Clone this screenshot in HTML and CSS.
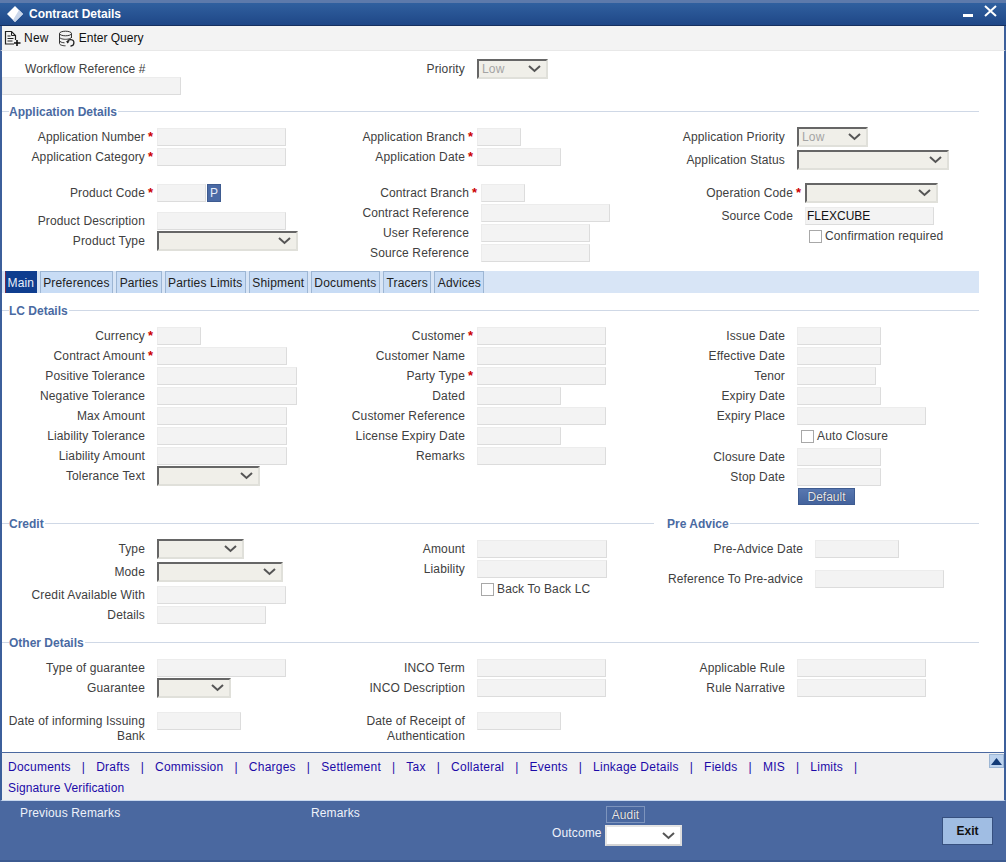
FILE: index.html
```html
<!DOCTYPE html>
<html lang="en">
<head>
<meta charset="utf-8">
<title>Contract Details</title>
<link rel="stylesheet" href="styles.css">
</head>
<body>
<div class="window">
  <header class="titlebar">
    <svg class="logo" width="18" height="18" viewBox="0 0 18 18"><path d="M9 1l8 8-8 8-8-8z" fill="#fff"/><path d="M13 5l4 4-8 8-2-2z" fill="#c9d6ea"/></svg>
    <span class="title">Contract Details</span>
    <svg class="min" width="10" height="4" viewBox="0 0 10 4"><rect width="10" height="3" y="1" fill="#fff"/></svg>
    <svg class="close" width="13" height="12" viewBox="0 0 13 12"><path d="M1 1l11 10M12 1L1 11" stroke="#fff" stroke-width="2" fill="none"/></svg>
  </header>
  <div class="toolbar">
    <span class="tool">
      <svg width="17" height="17" viewBox="0 0 17 17"><path d="M10 14H1.500V1.500h6l4 4V10" fill="none" stroke="#222" stroke-width="1.200"/><path d="M7.500 1.500v4h4M3.500 6h3M3.500 8.500h6M3.500 11h5" fill="none" stroke="#222"/><path d="M13 10v6M10 13h6.500" stroke="#111" stroke-width="1.600"/></svg>
      New
    </span>
    <span class="tool tool-query">
      <svg width="17" height="17" viewBox="0 0 17 17"><ellipse cx="7.500" cy="3.500" rx="6" ry="2.300" fill="none" stroke="#333"/><path d="M1.500 3.500v10c0 1.300 2.700 2.300 6 2.300M13.500 3.500V8M1.500 7c0 1.300 2.700 2.300 6 2.300s6-1 6-2.300M1.500 10.500c0 1.300 2.700 2.300 5 2.300" fill="none" stroke="#333"/><path d="M9.500 12.500a3.200 3.200 0 1 1 3 3.500" fill="none" stroke="#222" stroke-width="1.300"/><path d="M8 11l1.500 2.500 2-2z" fill="#222"/></svg>
      Enter Query
    </span>
  </div>

  <main class="form">
    <div class="cols top">
      <div>
        <div class="wf-label">Workflow Reference #</div>
        <input class="in w179" readonly>
      </div>
      <div>
        <div class="field"><label>Priority</label><span class="star"></span>
          <div class="sel w71"><span class="val">Low</span><svg class="chev" width="13" height="8" viewBox="0 0 13 8"><path d="M1 1l5.500 5L12 1" fill="none" stroke="#555" stroke-width="2"/></svg></div>
        </div>
      </div>
      <div></div>
    </div>

    <div class="legend"><span>Application Details</span></div>
    <div class="cols">
      <div>
        <div class="field"><label>Application Number</label><span class="star">*</span><input class="in w129" readonly></div>
        <div class="field"><label>Application Category</label><span class="star">*</span><input class="in w129" readonly></div>
        <div class="field mt16"><label>Product Code</label><span class="star">*</span><input class="in w49" readonly><button class="pbtn" type="button">P</button></div>
        <div class="field mt8"><label>Product Description</label><span class="star"></span><input class="in w129" readonly></div>
        <div class="field"><label>Product Type</label><span class="star"></span>
          <div class="sel w141"><svg class="chev" width="13" height="8" viewBox="0 0 13 8"><path d="M1 1l5.500 5L12 1" fill="none" stroke="#555" stroke-width="2"/></svg></div>
        </div>
      </div>
      <div>
        <div class="field"><label>Application Branch</label><span class="star">*</span><input class="in w44" readonly></div>
        <div class="field"><label>Application Date</label><span class="star">*</span><input class="in w84" readonly></div>
        <div class="field mt16 lab147"><label>Contract Branch</label><span class="star">*</span><input class="in w44" readonly></div>
        <div class="field lab147"><label>Contract Reference</label><span class="star"></span><input class="in w129" readonly></div>
        <div class="field lab147"><label>User Reference</label><span class="star"></span><input class="in w109" readonly></div>
        <div class="field lab147"><label>Source Reference</label><span class="star"></span><input class="in w109" readonly></div>
      </div>
      <div>
        <div class="field"><label>Application Priority</label><span class="star"></span>
          <div class="sel w71"><span class="val">Low</span><svg class="chev" width="13" height="8" viewBox="0 0 13 8"><path d="M1 1l5.500 5L12 1" fill="none" stroke="#555" stroke-width="2"/></svg></div>
        </div>
        <div class="field mt3"><label>Application Status</label><span class="star"></span>
          <div class="sel w152"><svg class="chev" width="13" height="8" viewBox="0 0 13 8"><path d="M1 1l5.500 5L12 1" fill="none" stroke="#555" stroke-width="2"/></svg></div>
        </div>
        <div class="field mt13 lab151"><label>Operation Code</label><span class="star">*</span>
          <div class="sel w133"><svg class="chev" width="13" height="8" viewBox="0 0 13 8"><path d="M1 1l5.500 5L12 1" fill="none" stroke="#555" stroke-width="2"/></svg></div>
        </div>
        <div class="field mt3 lab151"><label>Source Code</label><span class="star"></span><input class="in w129 filled" value="FLEXCUBE" readonly></div>
        <div class="check pl167"><span class="box"></span>Confirmation required</div>
      </div>
    </div>

    <nav class="tabs">
      <span class="tab active">Main</span>
      <span class="tab">Preferences</span>
      <span class="tab">Parties</span>
      <span class="tab">Parties Limits</span>
      <span class="tab">Shipment</span>
      <span class="tab">Documents</span>
      <span class="tab">Tracers</span>
      <span class="tab">Advices</span>
    </nav>

    <div class="legend lc"><span>LC Details</span></div>
    <div class="cols">
      <div>
        <div class="field"><label>Currency</label><span class="star">*</span><input class="in w44" readonly></div>
        <div class="field"><label>Contract Amount</label><span class="star">*</span><input class="in w130" readonly></div>
        <div class="field"><label>Positive Tolerance</label><span class="star"></span><input class="in w140" readonly></div>
        <div class="field"><label>Negative Tolerance</label><span class="star"></span><input class="in w140" readonly></div>
        <div class="field"><label>Max Amount</label><span class="star"></span><input class="in w130" readonly></div>
        <div class="field"><label>Liability Tolerance</label><span class="star"></span><input class="in w130" readonly></div>
        <div class="field"><label>Liability Amount</label><span class="star"></span><input class="in w130" readonly></div>
        <div class="field"><label>Tolerance Text</label><span class="star"></span>
          <div class="sel w103"><svg class="chev" width="13" height="8" viewBox="0 0 13 8"><path d="M1 1l5.500 5L12 1" fill="none" stroke="#555" stroke-width="2"/></svg></div>
        </div>
      </div>
      <div>
        <div class="field"><label>Customer</label><span class="star">*</span><input class="in w129" readonly></div>
        <div class="field"><label>Customer Name</label><span class="star"></span><input class="in w129" readonly></div>
        <div class="field"><label>Party Type</label><span class="star">*</span><input class="in w129" readonly></div>
        <div class="field"><label>Dated</label><span class="star"></span><input class="in w84" readonly></div>
        <div class="field"><label>Customer Reference</label><span class="star"></span><input class="in w129" readonly></div>
        <div class="field"><label>License Expiry Date</label><span class="star"></span><input class="in w84" readonly></div>
        <div class="field"><label>Remarks</label><span class="star"></span><input class="in w129" readonly></div>
      </div>
      <div>
        <div class="field"><label>Issue Date</label><span class="star"></span><input class="in w84" readonly></div>
        <div class="field"><label>Effective Date</label><span class="star"></span><input class="in w84" readonly></div>
        <div class="field"><label>Tenor</label><span class="star"></span><input class="in w79" readonly></div>
        <div class="field"><label>Expiry Date</label><span class="star"></span><input class="in w84" readonly></div>
        <div class="field"><label>Expiry Place</label><span class="star"></span><input class="in w129" readonly></div>
        <div class="check pl159"><span class="box"></span>Auto Closure</div>
        <div class="field mt1"><label>Closure Date</label><span class="star"></span><input class="in w84" readonly></div>
        <div class="field"><label>Stop Date</label><span class="star"></span><input class="in w84" readonly></div>
        <button class="btn default" type="button">Default</button>
      </div>
    </div>

    <div class="legend-row">
      <div class="legend credit"><span>Credit</span></div>
      <div class="legend pre"><span>Pre Advice</span></div>
    </div>
    <div class="cols">
      <div>
        <div class="field"><label>Type</label><span class="star"></span>
          <div class="sel w87"><svg class="chev" width="13" height="8" viewBox="0 0 13 8"><path d="M1 1l5.500 5L12 1" fill="none" stroke="#555" stroke-width="2"/></svg></div>
        </div>
        <div class="field mt3"><label>Mode</label><span class="star"></span>
          <div class="sel w126"><svg class="chev" width="13" height="8" viewBox="0 0 13 8"><path d="M1 1l5.500 5L12 1" fill="none" stroke="#555" stroke-width="2"/></svg></div>
        </div>
        <div class="field mt3"><label>Credit Available With</label><span class="star"></span><input class="in w129" readonly></div>
        <div class="field"><label>Details</label><span class="star"></span><input class="in w109" readonly></div>
      </div>
      <div>
        <div class="field"><label>Amount</label><span class="star"></span><input class="in w130" readonly></div>
        <div class="field"><label>Liability</label><span class="star"></span><input class="in w130" readonly></div>
        <div class="check pl159"><span class="box"></span>Back To Back LC</div>
      </div>
      <div>
        <div class="field lab161"><label>Pre-Advice Date</label><span class="star"></span><input class="in w84" readonly></div>
        <div class="field lab161 mt10"><label>Reference To Pre-advice</label><span class="star"></span><input class="in w129" readonly></div>
      </div>
    </div>

    <div class="legend other"><span>Other Details</span></div>
    <div class="cols">
      <div>
        <div class="field"><label>Type of guarantee</label><span class="star"></span><input class="in w129" readonly></div>
        <div class="field"><label>Guarantee</label><span class="star"></span>
          <div class="sel w74"><svg class="chev" width="13" height="8" viewBox="0 0 13 8"><path d="M1 1l5.500 5L12 1" fill="none" stroke="#555" stroke-width="2"/></svg></div>
        </div>
        <div class="field mt13 two"><label>Date of informing Issuing<br>Bank</label><span class="star"></span><input class="in w84" readonly></div>
      </div>
      <div>
        <div class="field"><label>INCO Term</label><span class="star"></span><input class="in w129" readonly></div>
        <div class="field"><label>INCO Description</label><span class="star"></span><input class="in w129" readonly></div>
        <div class="field mt13 two"><label>Date of Receipt of<br>Authentication</label><span class="star"></span><input class="in w84" readonly></div>
      </div>
      <div>
        <div class="field"><label>Applicable Rule</label><span class="star"></span><input class="in w129" readonly></div>
        <div class="field"><label>Rule Narrative</label><span class="star"></span><input class="in w129" readonly></div>
      </div>
    </div>
  </main>

  <div class="linkbar">
    <div class="links">
      <a>Documents</a><i>|</i><a>Drafts</a><i>|</i><a>Commission</a><i>|</i><a>Charges</a><i>|</i><a>Settlement</a><i>|</i><a>Tax</a><i>|</i><a>Collateral</a><i>|</i><a>Events</a><i>|</i><a>Linkage Details</a><i>|</i><a>Fields</a><i>|</i><a>MIS</a><i>|</i><a>Limits</a><i>|</i><a class="sig">Signature Verification</a>
    </div>
    <button class="scroll" type="button"><svg width="11" height="7" viewBox="0 0 11 7"><path d="M5.500 0L11 7H0z" fill="#123a78"/></svg></button>
  </div>

  <footer class="footer">
    <span class="foot-prev">Previous Remarks</span>
    <span class="foot-rem">Remarks</span>
    <div class="foot-mid">
      <button class="btn audit" type="button">Audit</button>
      <div class="outcome"><span class="outcome-label">Outcome</span>
        <div class="sel white"><svg class="chev" width="13" height="8" viewBox="0 0 13 8"><path d="M1 1l5.500 5L12 1" fill="none" stroke="#555" stroke-width="2"/></svg></div>
      </div>
    </div>
    <button class="exit" type="button">Exit</button>
  </footer>
</div>
</body>
</html>
```
FILE: styles.css
```css
* { box-sizing: border-box; }
html, body { margin: 0; height: 100%; }
body { font: 12px/20px "Liberation Sans", Arial, sans-serif; letter-spacing: 0.14px; color: #404040; background: #fff; overflow: hidden; }
.window { width: 1006px; height: 862px; display: flex; flex-direction: column; background: #fff; }

.titlebar { height: 26px; flex: none; display: flex; align-items: center; border-top: 3px solid #5d7aab; border-bottom: 1px solid #16305f; background: linear-gradient(#30609f, #1f4787); padding: 0 9px 0 6px; }
.logo { flex: none; }
.title { margin-left: 5px; color: #fff; font-weight: bold; letter-spacing: 0; }
.min { margin-left: auto; margin-top: 2px; }
.close { margin-left: 11px; margin-top: -6px; }

.toolbar { height: 25px; flex: none; display: flex; align-items: center; background: #f3f3f3; border-left: 2px solid #3c5f9b; border-right: 2px solid #3c5f9b; border-bottom: 1px solid #e8e8e8; padding-left: 2px; color: #111; letter-spacing: 0.25px; }
.tool { display: flex; align-items: center; gap: 3px; }
.tool-query { margin-left: 9px; gap: 4px; letter-spacing: 0; }

.form { flex: 1; min-height: 0; padding-top: 8px; border-left: 2px solid #3c5f9b; border-right: 2px solid #3c5f9b; background: #fff; }
.cols { display: grid; grid-template-columns: 320px 320px 1fr; align-items: start; }
.top { height: 44px; }
.wf-label { height: 18px; line-height: 20px; padding-left: 23px; }

.legend { display: flex; align-items: center; width: 977px; height: 16px; margin-bottom: 8px; color: #4a6aa2; font-weight: bold; line-height: 16px; letter-spacing: 0; }
.legend span { padding-top: 2px; }
.legend::before { content: ""; width: 7px; height: 1px; background: #cfd8e6; }
.legend::after { content: ""; flex: 1; height: 1px; margin-left: 1px; background: #cfd8e6; }
.lc { margin-top: 9px; }
.other { margin-top: 9px; }
.legend-row { display: flex; width: 977px; margin-top: 10px; }
.credit { width: 652px; }
.pre { flex: 1; width: auto; margin-left: 13px; }
.pre::before { display: none; }

.field { display: flex; height: 20px; align-items: center; }
.field label { flex: none; width: 143px; text-align: right; white-space: nowrap; }
.lab147 label { width: 147px; }
.lab151 label { width: 151px; }
.lab161 label { width: 161px; }
.star { flex: none; width: 12px; padding-left: 3px; color: #c00; font-weight: bold; font-size: 13px; }
.two { align-items: flex-start; }
.two label { line-height: 15px; padding-top: 3px; }

.in { display: block; height: 18px; padding: 0 1px; border: 1px solid #ececec; border-right-color: #dcdcdc; border-bottom-color: #dcdcdc; background: #f3f3f3; font: 12px "Liberation Sans", Arial, sans-serif; color: #111; outline: none; }
.two .in { margin-top: 1px; }
.w44 { width: 44px; } .w49 { width: 49px; } .w71 { width: 71px; } .w74 { width: 74px; }
.w79 { width: 79px; } .w84 { width: 84px; } .w87 { width: 87px; } .w103 { width: 103px; }
.w109 { width: 109px; } .w126 { width: 126px; } .w129 { width: 129px; } .w130 { width: 130px; }
.w133 { width: 133px; } .w140 { width: 140px; } .w141 { width: 141px; } .w152 { width: 152px; }
.w179 { width: 179px; }

.sel { flex: none; height: 20px; display: flex; align-items: center; padding: 0 5px 0 3px; border-style: solid; border-width: 2px; border-color: #666 #e0e0da #e0e0da #666; background: #f0efe9; }
.val { color: #a4a4a4; }
.chev { margin-left: auto; flex: none; }

.pbtn { width: 14px; height: 18px; margin-left: 1px; padding: 0; border: 1px solid #3e5b90; background: #4a6aa5; color: #e8eefa; font: 12px "Liberation Sans", Arial, sans-serif; }

.check { display: flex; align-items: center; height: 20px; gap: 3px; white-space: nowrap; }
.box { flex: none; width: 13px; height: 13px; background: #fff; border: 1px solid #a8a8a8; }
.pl159 { padding-left: 159px; }
.pl167 { padding-left: 167px; }

.mt1 { margin-top: 1px; } .mt3 { margin-top: 3px; } .mt8 { margin-top: 8px; }
.mt10 { margin-top: 10px; } .mt13 { margin-top: 13px; } .mt16 { margin-top: 16px; }

.tabs { display: flex; gap: 3px; width: 977px; height: 22px; margin-top: 8px; padding-left: 3px; background: #d8e5f6; letter-spacing: 0.16px; }
.tab { height: 22px; padding: 0 2.5px; line-height: 23px; background: #c8dcf5; border: 1px solid #9db6d4; border-bottom: 0; color: #222; }
.tab.active { padding: 0 1.5px; background: #0f3d8f; color: #e8eefa; border-color: #0f3d8f; border-left-color: #7a2a4a; }

.btn { display: block; padding: 0; font: 12px/16px "Liberation Sans", Arial, sans-serif; color: #e4e8f0; text-shadow: 0 0 1px #223; }
.default { width: 57px; height: 17px; margin: 1px 0 0 156px; border: 1px solid #3e5b90; background: linear-gradient(#5877b0, #44639d); }
.audit { width: 39px; height: 17px; margin-left: 54px; border: 1px solid #7d94bd; background: #4a68a0; }

.linkbar { height: 49px; flex: none; display: flex; align-items: flex-start; border-top: 1px solid #4a68a0; border-bottom: 1px solid #c9d8ee; border-left: 2px solid #3c5f9b; border-right: 2px solid #3c5f9b; background: #f0f0f2; }
.links { width: 880px; padding: 4px 0 0 6px; display: flex; flex-wrap: wrap; line-height: 21px; color: #1c0aa8; letter-spacing: 0.24px; }
.links i { font-style: normal; margin: 0 11px; }
.sig { letter-spacing: 0.13px; }
.scroll { margin: 1px 0 0 auto; width: 15px; height: 14px; padding: 0; display: flex; align-items: center; justify-content: center; border: 1px solid #9db6d4; background: #bcd2ee; }

.footer { height: 61px; flex: none; display: flex; align-items: flex-start; background: #4a68a0; border-bottom: 2px solid #3c5a90; color: #eef2fa; padding-left: 20px; }
.foot-prev { width: 291px; height: 24px; line-height: 25px; }
.foot-rem { width: 241px; height: 24px; line-height: 25px; }
.foot-mid { width: 131px; padding-top: 5px; }
.outcome { display: flex; align-items: flex-start; margin-top: 2px; gap: 3px; }
.outcome-label { line-height: 16px; }
.white { width: 77px; height: 21px; background: #fff; border-color: #e4e4e4 #ddd #d4d4d4 #e4e4e4; }
.exit { margin: 16px 13px 0 auto; width: 51px; height: 28px; padding: 0; border: 1px solid #37507f; background: #a0bde3; color: #111; font: bold 12px "Liberation Sans", Arial, sans-serif; }
```
